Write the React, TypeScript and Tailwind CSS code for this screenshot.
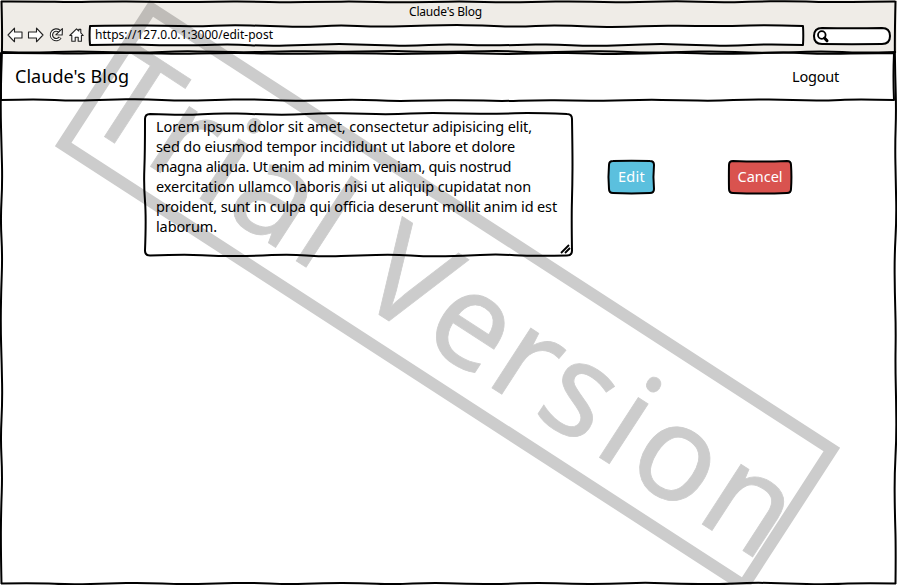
import { useLayoutEffect, useRef, useState } from "react";

type Pt = [number, number];

// Smooth, slightly wavering stroke between two points.
function wobble(a: Pt, b: Pt, seed: number, amp: number): string {
  const len = Math.hypot(b[0] - a[0], b[1] - a[1]);
  if (len < 1) return ` L${b[0]} ${b[1]}`;
  const n = Math.max(2, Math.round(len / 36));
  const nx = -(b[1] - a[1]) / len;
  const ny = (b[0] - a[0]) / len;
  const pts: Pt[] = [];
  for (let i = 0; i <= n; i++) {
    const t = i / n;
    const o = i === 0 || i === n ? 0 : amp * Math.sin(i * 2.1 + seed * 1.7 + Math.sin(i * seed) * 0.8);
    pts.push([a[0] + (b[0] - a[0]) * t + nx * o, a[1] + (b[1] - a[1]) * t + ny * o]);
  }
  let d = "";
  for (let i = 1; i < n; i++) {
    const mx = (pts[i][0] + pts[i + 1][0]) / 2;
    const my = (pts[i][1] + pts[i + 1][1]) / 2;
    const end = i === n - 1 ? pts[n] : [mx, my];
    d += ` Q${pts[i][0].toFixed(2)} ${pts[i][1].toFixed(2)} ${end[0].toFixed(2)} ${end[1].toFixed(2)}`;
  }
  return d;
}

function boxPath(w: number, h: number, r: number, seed: number, amp: number): string {
  return (
    `M${r} 0` + wobble([r, 0], [w - r, 0], seed, amp) + ` Q${w} 0 ${w} ${r}` +
    wobble([w, r], [w, h - r], seed + 1, amp) + ` Q${w} ${h} ${w - r} ${h}` +
    wobble([w - r, h], [r, h], seed + 2, amp) + ` Q0 ${h} 0 ${h - r}` +
    wobble([0, h - r], [0, r], seed + 3, amp) + ` Q0 0 ${r} 0Z`
  );
}

function Sketch({ w, h, r = 0, seed = 1, amp = 1, fill = "none", stroke = 2 }: {
  w: number; h: number; r?: number; seed?: number; amp?: number; fill?: string; stroke?: number;
}) {
  return (
    <svg className="pointer-events-none absolute left-0 top-0 overflow-visible" width={w} height={h}>
      <path d={boxPath(w, h, r, seed, amp)} fill={fill} stroke="#000" strokeWidth={stroke} strokeLinejoin="round" />
    </svg>
  );
}

// Tracks a line of text so that it takes up the given width.
function Fit({ text, width, className = "" }: { text: string; width: number; className?: string }) {
  const ref = useRef<HTMLSpanElement>(null);
  const [spacing, setSpacing] = useState(0);
  useLayoutEffect(() => {
    if (ref.current) {
      const natural = ref.current.getBoundingClientRect().width - spacing * text.length;
      setSpacing((width - natural) / text.length);
    }
  }, [text, width]);
  return (
    <span ref={ref} className={`relative inline-block whitespace-pre ${className}`} style={{ letterSpacing: `${spacing}px` }}>
      {text}
    </span>
  );
}

const LINES: [string, number][] = [
  ["Lorem ipsum dolor sit amet, consectetur adipisicing elit,", 376],
  ["sed do eiusmod tempor incididunt ut labore et dolore", 359],
  ["magna aliqua. Ut enim ad minim veniam, quis nostrud", 355],
  ["exercitation ullamco laboris nisi ut aliquip cupidatat non", 375],
  ["proident, sunt in culpa qui officia deserunt mollit anim id est", 401],
  ["laborum.", 61],
];

function NavIcons() {
  return (
    <svg width="80" height="18" viewBox="0 0 80 18" fill="#fff" stroke="#222" strokeWidth="1.1" strokeLinejoin="round">
      <path d="M1 9 7.5 2.2V6H15v6H7.5v3.8z" />
      <path d="M36 9 29.5 2.2V6H21.5v6h8v3.8z" />
      <path fill="none" strokeWidth="3.4" d="M53.2 11.6a4.8 4.8 0 1 1-.9-6.5" />
      <path fill="none" stroke="#fff" strokeWidth="1.3" d="M53 11.8a4.8 4.8 0 1 1-.9-6.7" />
      <path d="M55.4 2.6 55.2 9l-6.4-.2z" />
      <path d="M62.8 9.5 69.5 2.8l2.3 2.2V3.4h2v3.5L76.2 9.5H74.4v5.7h-3.2v-4h-3v4h-3.4V9.5z" />
    </svg>
  );
}

function Watermark() {
  const glyphs: [string, number][] = [
    ["T", -406], ["r", -331.5], ["i", -272.5], ["a", -235], ["l", -158], [" ", -110], ["V", -82],
    ["e", -1], ["r", 75.5], ["s", 132.5], ["i", 203.5], ["o", 241], ["n", 326],
  ];
  return (
    <svg className="pointer-events-none absolute left-0 top-0" width="897" height="585">
      <g transform="translate(447.5 297) rotate(32.95)" fill="#000" stroke="#000" opacity="0.195">
        <rect x="-405.5" y="-81" width="811" height="162" fill="none" strokeWidth="12" />
        <text className="font-['Noto_Sans',sans-serif]" fontSize="133" strokeWidth="0.8" y="52" x={glyphs.map((g) => g[1]).join(" ")}>
          {glyphs.map((g) => g[0]).join("")}
        </text>
      </g>
    </svg>
  );
}

export default function App() {
  return (
    <div className="relative flex h-[585px] w-[897px] flex-col overflow-hidden bg-white font-['Noto_Sans',sans-serif] text-black">
      <header className="flex h-[53px] flex-col bg-[#efece7]">
        <div className="flex h-6 justify-center pr-[6px] text-[12px] leading-6">
          <Fit text="Claude's Blog" width={73} />
        </div>
        <div className="flex h-6 pl-[7px]">
          <div className="w-[83px] pt-0.5"><NavIcons /></div>
          <div className="relative mt-[2px] h-[19px] w-[713px]">
            <Sketch w={713} h={19} seed={5} amp={1.2} fill="#fff" />
            <div className="relative pl-[5px] text-[12px] leading-[17px]">
              <Fit text="https://127.0.0.1:3000/edit-post" width={178} />
            </div>
          </div>
          <div className="relative ml-[11px] mt-1 h-4 w-[76px]">
            <Sketch w={76} h={16} r={8} seed={3} amp={0.8} fill="#fff" />
            <svg className="relative" width="20" height="16" fill="none" stroke="#000" strokeLinecap="round">
              <circle cx="7.8" cy="7" r="3.8" strokeWidth="1.8" />
              <path d="m10.5 10 2.5 2.8" strokeWidth="3" />
            </svg>
          </div>
        </div>
      </header>
      <nav className="relative ml-px flex h-[47px] w-[893px] items-center justify-between pl-[14px] pr-[55px]">
        <Sketch w={893} h={47} seed={2} amp={1.2} />
        <Fit text="Claude's Blog" width={114} className="text-[18px]" />
        <Fit text="Logout" width={47} className="text-[14.5px]" />
      </nav>
      <main className="flex flex-1 pl-[145px] pt-[14px]">
        <div className="relative h-[142px] w-[427px] pl-[11px] pt-[2px] text-[14.5px] leading-5">
          <Sketch w={427} h={141.5} r={5} seed={4} amp={1.4} />
          {LINES.map(([text, width]) => (
            <div key={text} className="h-5"><Fit text={text} width={width} /></div>
          ))}
          <svg className="absolute bottom-px right-0" width="12" height="12" stroke="#000" strokeWidth="1.8">
            <path d="m1 10 8-8M5 10l5-5" />
          </svg>
        </div>
        <button className="relative ml-[37px] mt-[47px] flex h-8 w-[45px] items-center justify-center text-[14.5px] text-white">
          <Sketch w={45} h={32} r={4} seed={6} amp={1.2} fill="#5bc0de" />
          <Fit text="Edit" width={27} />
        </button>
        <button className="relative ml-[75px] mt-[47px] flex h-8 w-[62px] items-center justify-center text-[14.5px] text-white">
          <Sketch w={62} h={32} r={4} seed={7} amp={1.2} fill="#d9534f" />
          <Fit text="Cancel" width={45} />
        </button>
      </main>
      <svg className="pointer-events-none absolute left-0 top-0" width="897" height="585" fill="none" stroke="#000" strokeWidth="2">
        <path d={"M1 1.5" + wobble([1, 1.5], [895.5, 1.5], 2, 1)} />
        <path d={"M1 52" + wobble([1, 52], [896, 52], 4, 1.2)} />
        <path d={"M895.5 1" + wobble([895.5, 1], [895.5, 584], 3, 1)} />
        <path d={"M1.5 1" + wobble([1.5, 1], [1.5, 584], 1, 1)} />
        <path d={"M1 583.5" + wobble([1, 583.5], [896, 583.5], 6, 1)} />
      </svg>
      <Watermark />
    </div>
  );
}
